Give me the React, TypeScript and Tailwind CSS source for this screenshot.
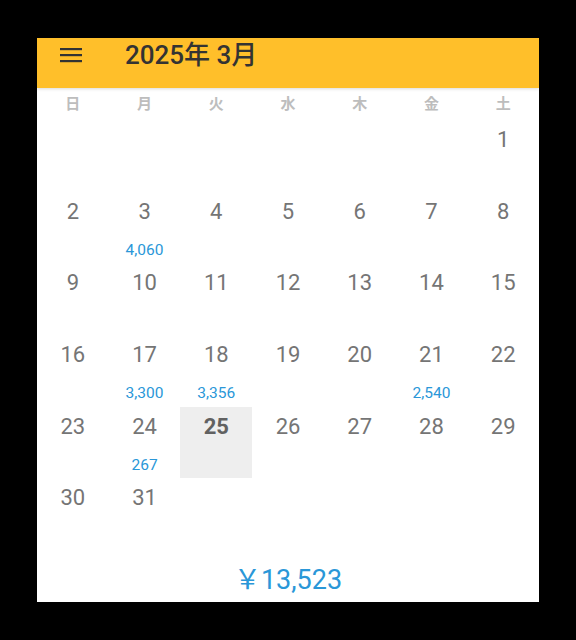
import React from 'react'

const WEEKDAYS = ['日', '月', '火', '水', '木', '金', '土']

// amounts keyed by day of month
const AMOUNTS: Record<number, string> = {
  3: '4,060',
  17: '3,300',
  18: '3,356',
  21: '2,540',
  24: '267',
}

const TODAY = 25
const FIRST_WEEKDAY = 6 // March 1st 2025 is a Saturday
const DAYS = 31

export default function App() {
  const cells: (number | null)[] = []
  for (let i = 0; i < FIRST_WEEKDAY; i++) cells.push(null)
  for (let d = 1; d <= DAYS; d++) cells.push(d)
  while (cells.length < 42) cells.push(null)

  return (
    <div
      className="flex min-h-[640px] w-full items-center justify-center bg-black"
      style={{ fontFamily: 'Roboto, "Noto Sans CJK JP", sans-serif' }}
    >
      <div className="flex h-[564px] w-[502px] flex-col bg-white">
        <header className="relative z-10 flex h-[50px] items-start bg-[#ffbf2a] pt-[1px] shadow-[0_1px_3px_rgba(0,0,0,0.15)]">
          <button className="ml-[22px] flex h-[32px] w-[24px] items-center justify-center text-[#333]">
            <svg width="22" height="16" viewBox="0 0 22 16" fill="none">
              <rect x="0" y="1" width="22" height="2.2" fill="currentColor" />
              <rect x="0" y="7" width="22" height="2.2" fill="currentColor" />
              <rect x="0" y="13" width="22" height="2.2" fill="currentColor" />
            </svg>
          </button>
          <h1 className="ml-[42px] text-[26px] font-medium leading-[32px] text-[#333]">2025年 3月</h1>
        </header>

        <div className="grid h-[32px] grid-cols-7 items-center">
          {WEEKDAYS.map((w) => (
            <div key={w} className="text-center text-[15px] font-bold text-[#bdbdbd]">
              {w}
            </div>
          ))}
        </div>

        <div className="grid grid-cols-7">
          {cells.map((d, i) => (
            <div
              key={i}
              className={`relative flex h-[71.7px] flex-col items-center ${d === TODAY ? 'bg-[#eeeeee]' : ''}`}
            >
              {d !== null && (
                <>
                  <span
                    className={`mt-[6px] text-[22px] leading-[28px] ${
                      d === TODAY ? 'font-bold text-[#616161]' : 'text-[#757575]'
                    }`}
                  >
                    {d}
                  </span>
                  {AMOUNTS[d] && (
                    <span className="absolute top-[48px] text-[15.5px] leading-[20px] text-[#2a97d8]">
                      {AMOUNTS[d]}
                    </span>
                  )}
                </>
              )}
            </div>
          ))}
        </div>

        <div className="flex flex-1 items-center justify-center pt-[8px] text-[27px] text-[#2a97d8]">
          ￥13,523
        </div>
      </div>
    </div>
  )
}
